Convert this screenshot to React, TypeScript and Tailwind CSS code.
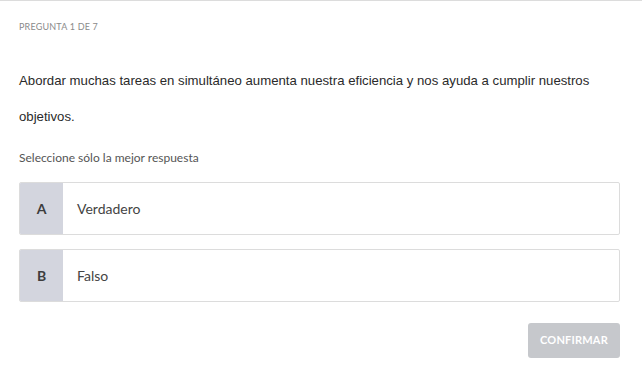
import React from 'react';

const OPTIONS = [
  { key: 'A', label: 'Verdadero' },
  { key: 'B', label: 'Falso' },
];

const App: React.FC = () => {
  return (
    <div className="w-[642px] h-[376px] bg-white border-t border-[#dcdcdc] pl-[19px] pr-[22px] font-['Lato',sans-serif]">
      <div className="pt-[20px] text-[9px] leading-[12px] tracking-[0.2px] text-[#8a8a8a] uppercase">Pregunta 1 de 7</div>

      <p className="mt-[30px] text-[13.2px] leading-[36px] text-[#2a2a2a] font-['Liberation_Sans',Arial,sans-serif]">
        Abordar muchas tareas en simultáneo aumenta nuestra eficiencia y nos ayuda a cumplir nuestros objetivos.
      </p>

      <div className="mt-[15px] text-[12px] leading-[16px] text-[#555]">Seleccione sólo la mejor respuesta</div>

      <div className="mt-[16px] flex flex-col gap-[14px]">
        {OPTIONS.map((opt) => (
          <div key={opt.key} className="flex h-[53px] rounded-[2px] border border-[#dcdcdc] overflow-hidden">
            <div className="w-[43px] bg-[#d3d5de] flex items-center justify-center text-[14px] font-bold text-[#3d3d3d]">
              {opt.key}
            </div>
            <div className="flex-1 flex items-center pl-[14px] text-[14px] text-[#444]">{opt.label}</div>
          </div>
        ))}
      </div>

      <div className="mt-[21px] flex justify-end">
        <button className="w-[92px] h-[35px] rounded-[3px] bg-[#c6c8cc] text-white text-[11px] font-bold tracking-[0.2px]">
          CONFIRMAR
        </button>
      </div>
    </div>
  );
};

export default App;
